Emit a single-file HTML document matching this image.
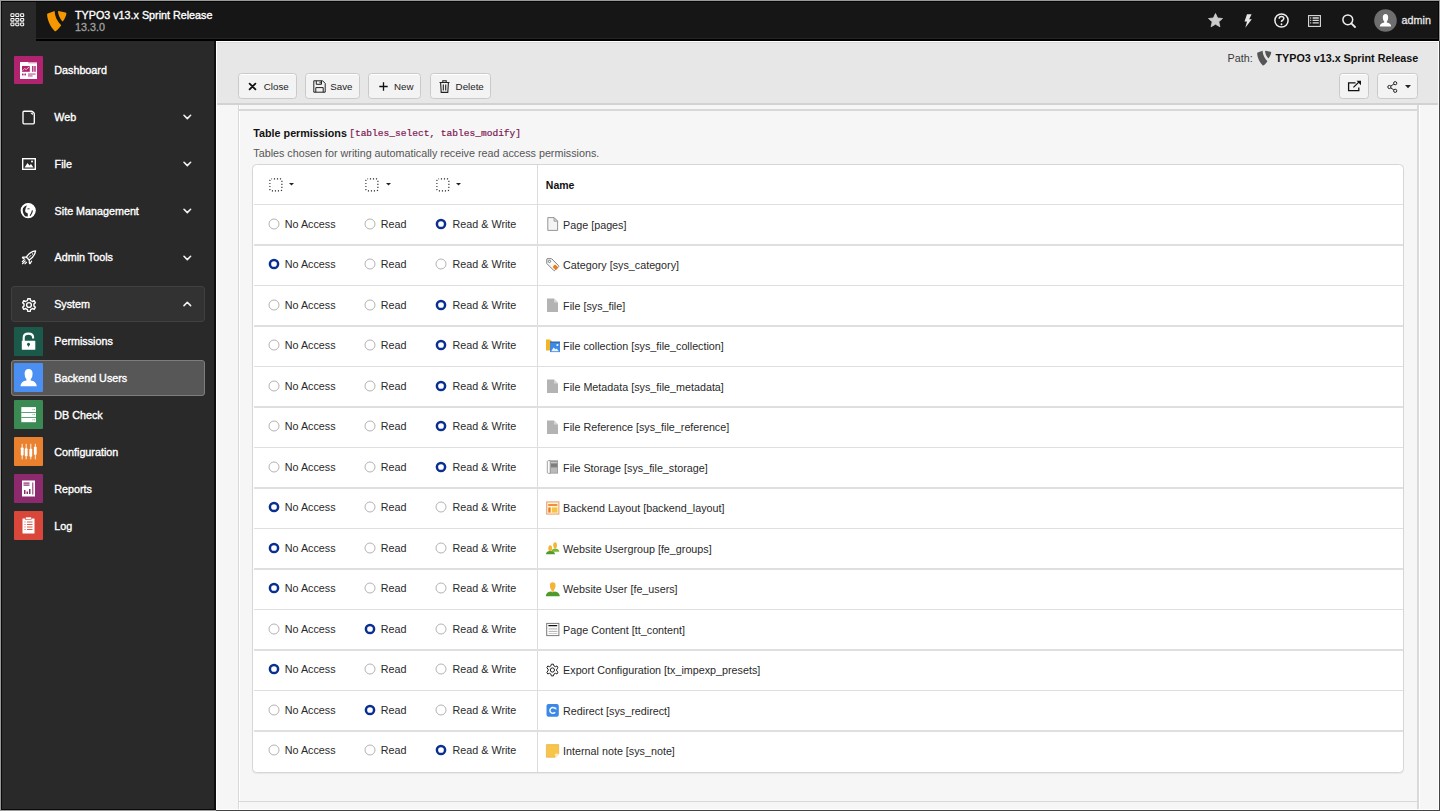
<!DOCTYPE html>
<html><head><meta charset="utf-8"><title>TYPO3 Backend Users</title>
<style>
html,body{margin:0;padding:0;width:1440px;height:811px;overflow:hidden;background:#f6f6f6;font-family:"Liberation Sans",sans-serif;}
.a{position:absolute;box-sizing:border-box;}
.t{position:absolute;white-space:nowrap;line-height:14px;}
svg.a{overflow:visible;}
</style></head><body>
<div class="a" style="left:216.00px;top:41.00px;width:1223.00px;height:770.00px;background:#f6f6f6"></div>
<div class="a" style="left:216.00px;top:41.00px;width:1223.00px;height:62.00px;background:#e7e7e7"></div>
<div class="a" style="left:216.00px;top:41.70px;width:1223.00px;height:1.30px;background:#dcdcdc"></div>
<div class="a" style="left:216.00px;top:103.00px;width:1223.00px;height:1.50px;background:#d2d2d2"></div>
<div class="a" style="left:216.00px;top:40.60px;width:1223.00px;height:1.10px;background:#ffffff"></div>
<div class="a" style="left:216.00px;top:41.00px;width:1.00px;height:770.00px;background:#ffffff"></div>
<div class="t" style="left:1227.60px;top:50.50px;font-size:10.75px;color:#3a3a3a;font-weight:normal;font-family:'Liberation Sans', sans-serif;">Path:</div>
<svg class="a" style="left:1256.00px;top:50.00px;" width="16" height="16" viewBox="0 0 21 22"><path fill="#555" d="M1.8,3.4 L8.6,1 C8.7,6 11,11.3 15.2,15.3 C13.6,17.6 11.6,19.9 10,21 Q9.3,21.5 8.6,20.9 C4.5,16.8 1.2,10 1.1,4.4 Q1.1,3.6 1.8,3.4 Z"/><path fill="#555" d="M12.4,1 L19.5,2.4 Q20.6,2.7 20.4,3.9 C19.8,6.6 18.3,9.5 17.1,11.1 Q16.6,11.8 16,11.1 C13.8,8.4 12.2,5 12,1.6 Q12,1 12.4,1 Z"/></svg>
<div class="t" style="left:1275.50px;top:50.50px;font-size:10.75px;color:#111;font-weight:bold;font-family:'Liberation Sans', sans-serif;">TYPO3 v13.x Sprint Release</div>
<div class="a" style="left:237.80px;top:73.30px;width:59.10px;height:25.40px;background:#f3f3f3;border:1.4px solid #cacaca;border-radius:3.5px;box-shadow:inset 0 1px 0 #fff"></div>
<div class="a" style="left:304.60px;top:73.30px;width:55.70px;height:25.40px;background:#f3f3f3;border:1.4px solid #cacaca;border-radius:3.5px;box-shadow:inset 0 1px 0 #fff"></div>
<div class="a" style="left:368.40px;top:73.30px;width:52.90px;height:25.40px;background:#f3f3f3;border:1.4px solid #cacaca;border-radius:3.5px;box-shadow:inset 0 1px 0 #fff"></div>
<div class="a" style="left:429.60px;top:73.30px;width:61.50px;height:25.40px;background:#f3f3f3;border:1.4px solid #cacaca;border-radius:3.5px;box-shadow:inset 0 1px 0 #fff"></div>
<div class="a" style="left:1339.00px;top:73.30px;width:29.50px;height:25.40px;background:#f3f3f3;border:1.4px solid #cacaca;border-radius:3.5px;box-shadow:inset 0 1px 0 #fff"></div>
<div class="a" style="left:1376.50px;top:73.30px;width:41.50px;height:25.40px;background:#f3f3f3;border:1.4px solid #cacaca;border-radius:3.5px;box-shadow:inset 0 1px 0 #fff"></div>
<div class="t" style="left:263.80px;top:79.50px;font-size:9.75px;color:#222;font-weight:normal;font-family:'Liberation Sans', sans-serif;">Close</div>
<div class="t" style="left:330.30px;top:79.50px;font-size:9.75px;color:#222;font-weight:normal;font-family:'Liberation Sans', sans-serif;">Save</div>
<div class="t" style="left:394.00px;top:79.50px;font-size:9.75px;color:#222;font-weight:normal;font-family:'Liberation Sans', sans-serif;">New</div>
<div class="t" style="left:455.60px;top:79.50px;font-size:9.75px;color:#222;font-weight:normal;font-family:'Liberation Sans', sans-serif;">Delete</div>
<svg class="a" style="left:249.30px;top:82.90px;" width="7" height="7" viewBox="0 0 7 7"><path d="M0.6,0.6 L6.4,6.4 M6.4,0.6 L0.6,6.4" stroke="#111" stroke-width="1.8" stroke-linecap="round"/></svg>
<svg class="a" style="left:313.00px;top:80.00px;" width="13" height="13" viewBox="0 0 13 13"><path d="M0.8,0.8 H9.6 L12.2,3.4 V12.2 H0.8 Z" fill="none" stroke="#222" stroke-width="1"/><path d="M3.3,0.8 V4.3 H8.5 V0.8" fill="none" stroke="#222" stroke-width="1"/><rect x="6.6" y="1.6" width="1.1" height="1.8" fill="#222"/><path d="M2.8,12.2 V7.6 H10.2 V12.2" fill="none" stroke="#222" stroke-width="1"/></svg>
<svg class="a" style="left:379.00px;top:81.50px;" width="9" height="9" viewBox="0 0 9 9"><path d="M4.5,0.3 V8.7 M0.3,4.5 H8.7" stroke="#111" stroke-width="1.3"/></svg>
<svg class="a" style="left:439.10px;top:80.00px;" width="11" height="13" viewBox="0 0 11 13"><path d="M0.5,2.5 H10.5 M3.8,2.3 V0.8 H7.2 V2.3 M1.6,2.6 L2.2,12.4 H8.8 L9.4,2.6 M4.3,4.5 V10.5 M6.7,4.5 V10.5" fill="none" stroke="#222" stroke-width="1.1"/></svg>
<svg class="a" style="left:1347.00px;top:80.00px;" width="15" height="12" viewBox="0 0 15 12"><path d="M8.6,2.9 H1.6 V10.6 H11.8 V7.6" fill="none" stroke="#111" stroke-width="1.3"/><path d="M6.4,7.4 L12.6,1.4" fill="none" stroke="#111" stroke-width="1.3"/><path d="M9.6,0.8 H14 V5.2 Z" fill="#111"/></svg>
<svg class="a" style="left:1386.50px;top:80.50px;" width="11" height="12" viewBox="0 0 11 12"><circle cx="8.2" cy="2.2" r="1.6" fill="none" stroke="#222" stroke-width="1"/><circle cx="2.4" cy="6" r="1.6" fill="none" stroke="#222" stroke-width="1"/><circle cx="8.2" cy="9.8" r="1.6" fill="none" stroke="#222" stroke-width="1"/><path d="M3.8,5.1 L6.8,3.1 M3.8,6.9 L6.8,8.9" stroke="#222" stroke-width="1"/></svg>
<svg class="a" style="left:1404.50px;top:85.30px;" width="6" height="4" viewBox="0 0 6 4"><path d="M0,0 H6 L3,3.2 Z" fill="#222"/></svg>
<div class="a" style="left:237.60px;top:104.50px;width:1.40px;height:706.50px;background:#d9d9d9"></div>
<div class="a" style="left:239.00px;top:104.50px;width:1.00px;height:706.50px;background:#ffffff"></div>
<div class="a" style="left:1417.40px;top:104.50px;width:1.60px;height:706.50px;background:#d9d9d9"></div>
<div class="a" style="left:1419.00px;top:104.50px;width:1.00px;height:706.50px;background:#ffffff"></div>
<div class="a" style="left:239.00px;top:109.20px;width:1178.40px;height:1.40px;background:#d8d8d8"></div>
<div class="a" style="left:240.00px;top:110.60px;width:1177.40px;height:700.40px;background:#f6f6f6"></div>
<div class="a" style="left:239.00px;top:801.00px;width:1178.40px;height:1.20px;background:#d8d8d8"></div>
<div class="t" style="left:253.30px;top:125.60px;font-size:10.75px;color:#111;font-weight:bold;font-family:'Liberation Sans', sans-serif;">Table permissions</div>
<div class="t" style="left:349.20px;top:126.50px;font-size:9.55px;color:#7d1752;font-weight:normal;font-family:'Liberation Mono', monospace;-webkit-text-stroke:0.2px #7d1752">[tables_select, tables_modify]</div>
<div class="t" style="left:253.30px;top:146.20px;font-size:10.75px;color:#555;font-weight:normal;font-family:'Liberation Sans', sans-serif;">Tables chosen for writing automatically receive read access permissions.</div>
<div class="a" style="left:252.00px;top:163.60px;width:1152.20px;height:609.60px;background:#fff;border:1.6px solid #d6d6d6;border-radius:4.5px;box-shadow:0 1px 1px rgba(0,0,0,0.06)"></div>
<div class="a" style="left:537.00px;top:164.80px;width:1.20px;height:607.20px;background:#dcdcdc"></div>
<svg class="a" style="left:268.50px;top:177.60px;" width="14" height="14" viewBox="0 0 14 14"><rect x="0.9" y="0.9" width="12" height="12" rx="1.6" fill="none" stroke="#222" stroke-width="1.1" stroke-dasharray="1.15 1.85" stroke-dashoffset="0.6"/></svg>
<svg class="a" style="left:364.80px;top:177.60px;" width="14" height="14" viewBox="0 0 14 14"><rect x="0.9" y="0.9" width="12" height="12" rx="1.6" fill="none" stroke="#222" stroke-width="1.1" stroke-dasharray="1.15 1.85" stroke-dashoffset="0.6"/></svg>
<svg class="a" style="left:435.80px;top:177.60px;" width="14" height="14" viewBox="0 0 14 14"><rect x="0.9" y="0.9" width="12" height="12" rx="1.6" fill="none" stroke="#222" stroke-width="1.1" stroke-dasharray="1.15 1.85" stroke-dashoffset="0.6"/></svg>
<svg class="a" style="left:288.60px;top:183.00px;" width="5" height="3" viewBox="0 0 5 3"><path d="M0,0 H5 L2.5,2.6 Z" fill="#222"/></svg>
<svg class="a" style="left:385.60px;top:183.00px;" width="5" height="3" viewBox="0 0 5 3"><path d="M0,0 H5 L2.5,2.6 Z" fill="#222"/></svg>
<svg class="a" style="left:456.30px;top:183.00px;" width="5" height="3" viewBox="0 0 5 3"><path d="M0,0 H5 L2.5,2.6 Z" fill="#222"/></svg>
<div class="t" style="left:545.80px;top:177.60px;font-size:10.5px;color:#111;font-weight:bold;font-family:'Liberation Sans', sans-serif;">Name</div>
<div class="a" style="left:253.60px;top:203.70px;width:1149.00px;height:1.60px;background:#dfdfdf"></div>
<svg class="a" style="left:267.50px;top:217.60px;" width="12" height="12" viewBox="0 0 12 12"><circle cx="6" cy="6" r="5" fill="#fff" stroke="#b3b3b3" stroke-width="1"/></svg>
<div class="t" style="left:284.80px;top:216.50px;font-size:10.75px;color:#2a2a2a;font-weight:normal;font-family:'Liberation Sans', sans-serif;">No Access</div>
<svg class="a" style="left:364.00px;top:217.60px;" width="12" height="12" viewBox="0 0 12 12"><circle cx="6" cy="6" r="5" fill="#fff" stroke="#b3b3b3" stroke-width="1"/></svg>
<div class="t" style="left:380.80px;top:216.50px;font-size:10.75px;color:#2a2a2a;font-weight:normal;font-family:'Liberation Sans', sans-serif;">Read</div>
<svg class="a" style="left:435.00px;top:217.60px;" width="12" height="12" viewBox="0 0 12 12"><circle cx="6" cy="6" r="4.1" fill="#fff" stroke="#0b2f91" stroke-width="2.5"/></svg>
<div class="t" style="left:452.60px;top:216.50px;font-size:10.75px;color:#2a2a2a;font-weight:normal;font-family:'Liberation Sans', sans-serif;">Read &amp; Write</div>
<svg class="a" style="left:546.00px;top:217.00px;" width="14" height="14" viewBox="0 0 14 14"><path d="M1.8,0.6 H8 L11.6,4.2 V13.4 H1.8 Z" fill="#f4f4f4" stroke="#8a8a8a" stroke-width="0.9"/><path d="M8,0.6 V4.2 H11.6 Z" fill="#dcdcdc" stroke="#8a8a8a" stroke-width="0.7" stroke-linejoin="round"/></svg>
<div class="t" style="left:563.10px;top:217.80px;font-size:10.75px;color:#2a2a2a;font-weight:normal;font-family:'Liberation Sans', sans-serif;">Page [pages]</div>
<div class="a" style="left:253.60px;top:244.20px;width:1149.00px;height:1.60px;background:#dfdfdf"></div>
<svg class="a" style="left:267.50px;top:258.10px;" width="12" height="12" viewBox="0 0 12 12"><circle cx="6" cy="6" r="4.1" fill="#fff" stroke="#0b2f91" stroke-width="2.5"/></svg>
<div class="t" style="left:284.80px;top:257.00px;font-size:10.75px;color:#2a2a2a;font-weight:normal;font-family:'Liberation Sans', sans-serif;">No Access</div>
<svg class="a" style="left:364.00px;top:258.10px;" width="12" height="12" viewBox="0 0 12 12"><circle cx="6" cy="6" r="5" fill="#fff" stroke="#b3b3b3" stroke-width="1"/></svg>
<div class="t" style="left:380.80px;top:257.00px;font-size:10.75px;color:#2a2a2a;font-weight:normal;font-family:'Liberation Sans', sans-serif;">Read</div>
<svg class="a" style="left:435.00px;top:258.10px;" width="12" height="12" viewBox="0 0 12 12"><circle cx="6" cy="6" r="5" fill="#fff" stroke="#b3b3b3" stroke-width="1"/></svg>
<div class="t" style="left:452.60px;top:257.00px;font-size:10.75px;color:#2a2a2a;font-weight:normal;font-family:'Liberation Sans', sans-serif;">Read &amp; Write</div>
<svg class="a" style="left:546.00px;top:257.50px;" width="14" height="14" viewBox="0 0 14 14"><path d="M1.1,0.7 H5.6 L12.6,7.7 Q13.1,8.2 12.6,8.7 L8.8,12.5 Q8.3,13 7.8,12.5 L0.8,5.5 V1 Z" fill="#fafafa" stroke="#7c7c7c" stroke-width="1"/><circle cx="3.5" cy="3.4" r="1.15" fill="none" stroke="#6f6f6f" stroke-width="0.9"/><rect x="7.6" y="6.9" width="3.6" height="4.6" rx="1" fill="#ee7a16" transform="rotate(-45 9.4 9.2)"/></svg>
<div class="t" style="left:563.10px;top:258.30px;font-size:10.75px;color:#2a2a2a;font-weight:normal;font-family:'Liberation Sans', sans-serif;">Category [sys_category]</div>
<div class="a" style="left:253.60px;top:284.70px;width:1149.00px;height:1.60px;background:#dfdfdf"></div>
<svg class="a" style="left:267.50px;top:298.60px;" width="12" height="12" viewBox="0 0 12 12"><circle cx="6" cy="6" r="5" fill="#fff" stroke="#b3b3b3" stroke-width="1"/></svg>
<div class="t" style="left:284.80px;top:297.50px;font-size:10.75px;color:#2a2a2a;font-weight:normal;font-family:'Liberation Sans', sans-serif;">No Access</div>
<svg class="a" style="left:364.00px;top:298.60px;" width="12" height="12" viewBox="0 0 12 12"><circle cx="6" cy="6" r="5" fill="#fff" stroke="#b3b3b3" stroke-width="1"/></svg>
<div class="t" style="left:380.80px;top:297.50px;font-size:10.75px;color:#2a2a2a;font-weight:normal;font-family:'Liberation Sans', sans-serif;">Read</div>
<svg class="a" style="left:435.00px;top:298.60px;" width="12" height="12" viewBox="0 0 12 12"><circle cx="6" cy="6" r="4.1" fill="#fff" stroke="#0b2f91" stroke-width="2.5"/></svg>
<div class="t" style="left:452.60px;top:297.50px;font-size:10.75px;color:#2a2a2a;font-weight:normal;font-family:'Liberation Sans', sans-serif;">Read &amp; Write</div>
<svg class="a" style="left:546.00px;top:298.00px;" width="14" height="14" viewBox="0 0 14 14"><path d="M1,0.5 H8 L12,4.5 V13.9 H1 Z" fill="#b3b3b3"/><path d="M8,0.5 V4.5 H12 Z" fill="#d6d6d6"/></svg>
<div class="t" style="left:563.10px;top:298.80px;font-size:10.75px;color:#2a2a2a;font-weight:normal;font-family:'Liberation Sans', sans-serif;">File [sys_file]</div>
<div class="a" style="left:253.60px;top:325.20px;width:1149.00px;height:1.60px;background:#dfdfdf"></div>
<svg class="a" style="left:267.50px;top:339.10px;" width="12" height="12" viewBox="0 0 12 12"><circle cx="6" cy="6" r="5" fill="#fff" stroke="#b3b3b3" stroke-width="1"/></svg>
<div class="t" style="left:284.80px;top:338.00px;font-size:10.75px;color:#2a2a2a;font-weight:normal;font-family:'Liberation Sans', sans-serif;">No Access</div>
<svg class="a" style="left:364.00px;top:339.10px;" width="12" height="12" viewBox="0 0 12 12"><circle cx="6" cy="6" r="5" fill="#fff" stroke="#b3b3b3" stroke-width="1"/></svg>
<div class="t" style="left:380.80px;top:338.00px;font-size:10.75px;color:#2a2a2a;font-weight:normal;font-family:'Liberation Sans', sans-serif;">Read</div>
<svg class="a" style="left:435.00px;top:339.10px;" width="12" height="12" viewBox="0 0 12 12"><circle cx="6" cy="6" r="4.1" fill="#fff" stroke="#0b2f91" stroke-width="2.5"/></svg>
<div class="t" style="left:452.60px;top:338.00px;font-size:10.75px;color:#2a2a2a;font-weight:normal;font-family:'Liberation Sans', sans-serif;">Read &amp; Write</div>
<svg class="a" style="left:546.00px;top:338.50px;" width="14" height="14" viewBox="0 0 14 14"><path d="M0,0.6 H3.8 L5.9,2 V11.6 H0 Z" fill="#f2b526"/><rect x="4" y="2.7" width="10" height="10.4" fill="#3f89e6"/><rect x="4" y="2.7" width="10" height="0.9" fill="#2f5f9c"/><path d="M5.2,12.2 L7.6,8.6 L9.4,10.3 L10.6,9.4 L12.9,12.2 Z" fill="#e9f6ff"/><circle cx="11.4" cy="6" r="1.1" fill="#e9f6ff"/></svg>
<div class="t" style="left:563.10px;top:339.30px;font-size:10.75px;color:#2a2a2a;font-weight:normal;font-family:'Liberation Sans', sans-serif;">File collection [sys_file_collection]</div>
<div class="a" style="left:253.60px;top:365.70px;width:1149.00px;height:1.60px;background:#dfdfdf"></div>
<svg class="a" style="left:267.50px;top:379.60px;" width="12" height="12" viewBox="0 0 12 12"><circle cx="6" cy="6" r="5" fill="#fff" stroke="#b3b3b3" stroke-width="1"/></svg>
<div class="t" style="left:284.80px;top:378.50px;font-size:10.75px;color:#2a2a2a;font-weight:normal;font-family:'Liberation Sans', sans-serif;">No Access</div>
<svg class="a" style="left:364.00px;top:379.60px;" width="12" height="12" viewBox="0 0 12 12"><circle cx="6" cy="6" r="5" fill="#fff" stroke="#b3b3b3" stroke-width="1"/></svg>
<div class="t" style="left:380.80px;top:378.50px;font-size:10.75px;color:#2a2a2a;font-weight:normal;font-family:'Liberation Sans', sans-serif;">Read</div>
<svg class="a" style="left:435.00px;top:379.60px;" width="12" height="12" viewBox="0 0 12 12"><circle cx="6" cy="6" r="4.1" fill="#fff" stroke="#0b2f91" stroke-width="2.5"/></svg>
<div class="t" style="left:452.60px;top:378.50px;font-size:10.75px;color:#2a2a2a;font-weight:normal;font-family:'Liberation Sans', sans-serif;">Read &amp; Write</div>
<svg class="a" style="left:546.00px;top:379.00px;" width="14" height="14" viewBox="0 0 14 14"><path d="M1,0.5 H8 L12,4.5 V13.9 H1 Z" fill="#b3b3b3"/><path d="M8,0.5 V4.5 H12 Z" fill="#d6d6d6"/></svg>
<div class="t" style="left:563.10px;top:379.80px;font-size:10.75px;color:#2a2a2a;font-weight:normal;font-family:'Liberation Sans', sans-serif;">File Metadata [sys_file_metadata]</div>
<div class="a" style="left:253.60px;top:406.20px;width:1149.00px;height:1.60px;background:#dfdfdf"></div>
<svg class="a" style="left:267.50px;top:420.10px;" width="12" height="12" viewBox="0 0 12 12"><circle cx="6" cy="6" r="5" fill="#fff" stroke="#b3b3b3" stroke-width="1"/></svg>
<div class="t" style="left:284.80px;top:419.00px;font-size:10.75px;color:#2a2a2a;font-weight:normal;font-family:'Liberation Sans', sans-serif;">No Access</div>
<svg class="a" style="left:364.00px;top:420.10px;" width="12" height="12" viewBox="0 0 12 12"><circle cx="6" cy="6" r="5" fill="#fff" stroke="#b3b3b3" stroke-width="1"/></svg>
<div class="t" style="left:380.80px;top:419.00px;font-size:10.75px;color:#2a2a2a;font-weight:normal;font-family:'Liberation Sans', sans-serif;">Read</div>
<svg class="a" style="left:435.00px;top:420.10px;" width="12" height="12" viewBox="0 0 12 12"><circle cx="6" cy="6" r="4.1" fill="#fff" stroke="#0b2f91" stroke-width="2.5"/></svg>
<div class="t" style="left:452.60px;top:419.00px;font-size:10.75px;color:#2a2a2a;font-weight:normal;font-family:'Liberation Sans', sans-serif;">Read &amp; Write</div>
<svg class="a" style="left:546.00px;top:419.50px;" width="14" height="14" viewBox="0 0 14 14"><path d="M1,0.5 H8 L12,4.5 V13.9 H1 Z" fill="#b3b3b3"/><path d="M8,0.5 V4.5 H12 Z" fill="#d6d6d6"/></svg>
<div class="t" style="left:563.10px;top:420.30px;font-size:10.75px;color:#2a2a2a;font-weight:normal;font-family:'Liberation Sans', sans-serif;">File Reference [sys_file_reference]</div>
<div class="a" style="left:253.60px;top:446.70px;width:1149.00px;height:1.60px;background:#dfdfdf"></div>
<svg class="a" style="left:267.50px;top:460.60px;" width="12" height="12" viewBox="0 0 12 12"><circle cx="6" cy="6" r="5" fill="#fff" stroke="#b3b3b3" stroke-width="1"/></svg>
<div class="t" style="left:284.80px;top:459.50px;font-size:10.75px;color:#2a2a2a;font-weight:normal;font-family:'Liberation Sans', sans-serif;">No Access</div>
<svg class="a" style="left:364.00px;top:460.60px;" width="12" height="12" viewBox="0 0 12 12"><circle cx="6" cy="6" r="5" fill="#fff" stroke="#b3b3b3" stroke-width="1"/></svg>
<div class="t" style="left:380.80px;top:459.50px;font-size:10.75px;color:#2a2a2a;font-weight:normal;font-family:'Liberation Sans', sans-serif;">Read</div>
<svg class="a" style="left:435.00px;top:460.60px;" width="12" height="12" viewBox="0 0 12 12"><circle cx="6" cy="6" r="4.1" fill="#fff" stroke="#0b2f91" stroke-width="2.5"/></svg>
<div class="t" style="left:452.60px;top:459.50px;font-size:10.75px;color:#2a2a2a;font-weight:normal;font-family:'Liberation Sans', sans-serif;">Read &amp; Write</div>
<svg class="a" style="left:546.00px;top:460.00px;" width="14" height="14" viewBox="0 0 14 14"><path d="M1.3,1.5 Q1.3,0.9 2.2,0.7 L4.2,0.3 V13.6 L2.2,13.2 Q1.3,13 1.3,12.4 Z" fill="#fdfdfd" stroke="#8a8a8a" stroke-width="0.8"/><rect x="4.2" y="0.3" width="7.8" height="13.3" fill="#9a9a9a"/><rect x="5" y="2.3" width="6.2" height="0.8" fill="#d8d8d8"/><rect x="5" y="3.8" width="6.2" height="3" fill="#7d7d7d"/><rect x="5" y="7.8" width="6.2" height="5" fill="#b9b9b9"/></svg>
<div class="t" style="left:563.10px;top:460.80px;font-size:10.75px;color:#2a2a2a;font-weight:normal;font-family:'Liberation Sans', sans-serif;">File Storage [sys_file_storage]</div>
<div class="a" style="left:253.60px;top:487.20px;width:1149.00px;height:1.60px;background:#dfdfdf"></div>
<svg class="a" style="left:267.50px;top:501.10px;" width="12" height="12" viewBox="0 0 12 12"><circle cx="6" cy="6" r="4.1" fill="#fff" stroke="#0b2f91" stroke-width="2.5"/></svg>
<div class="t" style="left:284.80px;top:500.00px;font-size:10.75px;color:#2a2a2a;font-weight:normal;font-family:'Liberation Sans', sans-serif;">No Access</div>
<svg class="a" style="left:364.00px;top:501.10px;" width="12" height="12" viewBox="0 0 12 12"><circle cx="6" cy="6" r="5" fill="#fff" stroke="#b3b3b3" stroke-width="1"/></svg>
<div class="t" style="left:380.80px;top:500.00px;font-size:10.75px;color:#2a2a2a;font-weight:normal;font-family:'Liberation Sans', sans-serif;">Read</div>
<svg class="a" style="left:435.00px;top:501.10px;" width="12" height="12" viewBox="0 0 12 12"><circle cx="6" cy="6" r="5" fill="#fff" stroke="#b3b3b3" stroke-width="1"/></svg>
<div class="t" style="left:452.60px;top:500.00px;font-size:10.75px;color:#2a2a2a;font-weight:normal;font-family:'Liberation Sans', sans-serif;">Read &amp; Write</div>
<svg class="a" style="left:546.00px;top:500.50px;" width="14" height="14" viewBox="0 0 14 14"><rect x="0.7" y="0.9" width="12.2" height="12.2" fill="#fff6cf" stroke="#e79b75" stroke-width="1"/><rect x="2.2" y="3.2" width="9.2" height="1.6" fill="#ee7424"/><rect x="2.3" y="6.4" width="2.3" height="5.2" fill="#ee7424"/><rect x="5.9" y="6.4" width="5.5" height="5.2" fill="#f6c443"/></svg>
<div class="t" style="left:563.10px;top:501.30px;font-size:10.75px;color:#2a2a2a;font-weight:normal;font-family:'Liberation Sans', sans-serif;">Backend Layout [backend_layout]</div>
<div class="a" style="left:253.60px;top:527.70px;width:1149.00px;height:1.60px;background:#dfdfdf"></div>
<svg class="a" style="left:267.50px;top:541.60px;" width="12" height="12" viewBox="0 0 12 12"><circle cx="6" cy="6" r="4.1" fill="#fff" stroke="#0b2f91" stroke-width="2.5"/></svg>
<div class="t" style="left:284.80px;top:540.50px;font-size:10.75px;color:#2a2a2a;font-weight:normal;font-family:'Liberation Sans', sans-serif;">No Access</div>
<svg class="a" style="left:364.00px;top:541.60px;" width="12" height="12" viewBox="0 0 12 12"><circle cx="6" cy="6" r="5" fill="#fff" stroke="#b3b3b3" stroke-width="1"/></svg>
<div class="t" style="left:380.80px;top:540.50px;font-size:10.75px;color:#2a2a2a;font-weight:normal;font-family:'Liberation Sans', sans-serif;">Read</div>
<svg class="a" style="left:435.00px;top:541.60px;" width="12" height="12" viewBox="0 0 12 12"><circle cx="6" cy="6" r="5" fill="#fff" stroke="#b3b3b3" stroke-width="1"/></svg>
<div class="t" style="left:452.60px;top:540.50px;font-size:10.75px;color:#2a2a2a;font-weight:normal;font-family:'Liberation Sans', sans-serif;">Read &amp; Write</div>
<svg class="a" style="left:546.00px;top:541.00px;" width="14" height="14" viewBox="0 0 14 14"><ellipse cx="9.1" cy="4.3" rx="1.9" ry="3.1" fill="#f2b53a"/><path d="M5.5,10.8 Q6,7.6 9,7.6 Q12.8,7.6 13.4,10.8 Z" fill="#7cb82f"/><ellipse cx="4.2" cy="7.4" rx="1.9" ry="3.1" fill="#f2b53a"/><path d="M-0.1,13.2 Q0.4,10.1 4.2,10.1 Q8.6,10.1 9,13.2 Z" fill="#4f9a2a"/></svg>
<div class="t" style="left:563.10px;top:541.80px;font-size:10.75px;color:#2a2a2a;font-weight:normal;font-family:'Liberation Sans', sans-serif;">Website Usergroup [fe_groups]</div>
<div class="a" style="left:253.60px;top:568.20px;width:1149.00px;height:1.60px;background:#dfdfdf"></div>
<svg class="a" style="left:267.50px;top:582.10px;" width="12" height="12" viewBox="0 0 12 12"><circle cx="6" cy="6" r="4.1" fill="#fff" stroke="#0b2f91" stroke-width="2.5"/></svg>
<div class="t" style="left:284.80px;top:581.00px;font-size:10.75px;color:#2a2a2a;font-weight:normal;font-family:'Liberation Sans', sans-serif;">No Access</div>
<svg class="a" style="left:364.00px;top:582.10px;" width="12" height="12" viewBox="0 0 12 12"><circle cx="6" cy="6" r="5" fill="#fff" stroke="#b3b3b3" stroke-width="1"/></svg>
<div class="t" style="left:380.80px;top:581.00px;font-size:10.75px;color:#2a2a2a;font-weight:normal;font-family:'Liberation Sans', sans-serif;">Read</div>
<svg class="a" style="left:435.00px;top:582.10px;" width="12" height="12" viewBox="0 0 12 12"><circle cx="6" cy="6" r="5" fill="#fff" stroke="#b3b3b3" stroke-width="1"/></svg>
<div class="t" style="left:452.60px;top:581.00px;font-size:10.75px;color:#2a2a2a;font-weight:normal;font-family:'Liberation Sans', sans-serif;">Read &amp; Write</div>
<svg class="a" style="left:546.00px;top:581.50px;" width="14" height="14" viewBox="0 0 14 14"><path d="M6.7,0.3 Q3.8,0.3 3.8,3.6 Q3.8,6.6 5.5,8.2 V9.7 H7.9 V8.2 Q9.6,6.6 9.6,3.6 Q9.6,0.3 6.7,0.3 Z" fill="#f2b53a"/><path d="M-0.2,14.3 Q0,10.3 4.5,9.6 L6.7,10.3 L8.9,9.6 Q13.6,10.3 13.8,14.3 Z" fill="#4f9a2a"/></svg>
<div class="t" style="left:563.10px;top:582.30px;font-size:10.75px;color:#2a2a2a;font-weight:normal;font-family:'Liberation Sans', sans-serif;">Website User [fe_users]</div>
<div class="a" style="left:253.60px;top:608.70px;width:1149.00px;height:1.60px;background:#dfdfdf"></div>
<svg class="a" style="left:267.50px;top:622.60px;" width="12" height="12" viewBox="0 0 12 12"><circle cx="6" cy="6" r="5" fill="#fff" stroke="#b3b3b3" stroke-width="1"/></svg>
<div class="t" style="left:284.80px;top:621.50px;font-size:10.75px;color:#2a2a2a;font-weight:normal;font-family:'Liberation Sans', sans-serif;">No Access</div>
<svg class="a" style="left:364.00px;top:622.60px;" width="12" height="12" viewBox="0 0 12 12"><circle cx="6" cy="6" r="4.1" fill="#fff" stroke="#0b2f91" stroke-width="2.5"/></svg>
<div class="t" style="left:380.80px;top:621.50px;font-size:10.75px;color:#2a2a2a;font-weight:normal;font-family:'Liberation Sans', sans-serif;">Read</div>
<svg class="a" style="left:435.00px;top:622.60px;" width="12" height="12" viewBox="0 0 12 12"><circle cx="6" cy="6" r="5" fill="#fff" stroke="#b3b3b3" stroke-width="1"/></svg>
<div class="t" style="left:452.60px;top:621.50px;font-size:10.75px;color:#2a2a2a;font-weight:normal;font-family:'Liberation Sans', sans-serif;">Read &amp; Write</div>
<svg class="a" style="left:546.00px;top:622.00px;" width="14" height="14" viewBox="0 0 14 14"><rect x="0.7" y="1.4" width="12.2" height="12.2" fill="#fff" stroke="#7a7a7a" stroke-width="1"/><rect x="2.3" y="3.1" width="9" height="1.2" rx="0.5" fill="#111"/><rect x="2.6" y="5.9" width="8.7" height="1.8" fill="#cfcfcf"/><rect x="2.6" y="8.9" width="8.7" height="0.8" fill="#9a9a9a"/><rect x="2.6" y="11" width="8.7" height="0.8" fill="#bdbdbd"/></svg>
<div class="t" style="left:563.10px;top:622.80px;font-size:10.75px;color:#2a2a2a;font-weight:normal;font-family:'Liberation Sans', sans-serif;">Page Content [tt_content]</div>
<div class="a" style="left:253.60px;top:649.20px;width:1149.00px;height:1.60px;background:#dfdfdf"></div>
<svg class="a" style="left:267.50px;top:663.10px;" width="12" height="12" viewBox="0 0 12 12"><circle cx="6" cy="6" r="4.1" fill="#fff" stroke="#0b2f91" stroke-width="2.5"/></svg>
<div class="t" style="left:284.80px;top:662.00px;font-size:10.75px;color:#2a2a2a;font-weight:normal;font-family:'Liberation Sans', sans-serif;">No Access</div>
<svg class="a" style="left:364.00px;top:663.10px;" width="12" height="12" viewBox="0 0 12 12"><circle cx="6" cy="6" r="5" fill="#fff" stroke="#b3b3b3" stroke-width="1"/></svg>
<div class="t" style="left:380.80px;top:662.00px;font-size:10.75px;color:#2a2a2a;font-weight:normal;font-family:'Liberation Sans', sans-serif;">Read</div>
<svg class="a" style="left:435.00px;top:663.10px;" width="12" height="12" viewBox="0 0 12 12"><circle cx="6" cy="6" r="5" fill="#fff" stroke="#b3b3b3" stroke-width="1"/></svg>
<div class="t" style="left:452.60px;top:662.00px;font-size:10.75px;color:#2a2a2a;font-weight:normal;font-family:'Liberation Sans', sans-serif;">Read &amp; Write</div>
<svg class="a" style="left:546.00px;top:662.50px;" width="14" height="14" viewBox="0 0 14 14"><path d="M5.4,0.9 H7.4 L7.9,2.6 L9.4,3.4 L11,2.7 L12,4.5 L10.7,5.8 V7.6 L12,8.9 L11,10.7 L9.4,10 L7.9,10.8 L7.4,12.6 H5.4 L4.9,10.8 L3.4,10 L1.8,10.7 L0.8,8.9 L2.1,7.6 V5.8 L0.8,4.5 L1.8,2.7 L3.4,3.4 L4.9,2.6 Z" fill="none" stroke="#222" stroke-width="1" stroke-linejoin="round" transform="translate(0,0.3)"/><circle cx="6.4" cy="7" r="2.1" fill="none" stroke="#222" stroke-width="1"/></svg>
<div class="t" style="left:563.10px;top:663.30px;font-size:10.75px;color:#2a2a2a;font-weight:normal;font-family:'Liberation Sans', sans-serif;">Export Configuration [tx_impexp_presets]</div>
<div class="a" style="left:253.60px;top:689.70px;width:1149.00px;height:1.60px;background:#dfdfdf"></div>
<svg class="a" style="left:267.50px;top:703.60px;" width="12" height="12" viewBox="0 0 12 12"><circle cx="6" cy="6" r="5" fill="#fff" stroke="#b3b3b3" stroke-width="1"/></svg>
<div class="t" style="left:284.80px;top:702.50px;font-size:10.75px;color:#2a2a2a;font-weight:normal;font-family:'Liberation Sans', sans-serif;">No Access</div>
<svg class="a" style="left:364.00px;top:703.60px;" width="12" height="12" viewBox="0 0 12 12"><circle cx="6" cy="6" r="4.1" fill="#fff" stroke="#0b2f91" stroke-width="2.5"/></svg>
<div class="t" style="left:380.80px;top:702.50px;font-size:10.75px;color:#2a2a2a;font-weight:normal;font-family:'Liberation Sans', sans-serif;">Read</div>
<svg class="a" style="left:435.00px;top:703.60px;" width="12" height="12" viewBox="0 0 12 12"><circle cx="6" cy="6" r="5" fill="#fff" stroke="#b3b3b3" stroke-width="1"/></svg>
<div class="t" style="left:452.60px;top:702.50px;font-size:10.75px;color:#2a2a2a;font-weight:normal;font-family:'Liberation Sans', sans-serif;">Read &amp; Write</div>
<svg class="a" style="left:546.00px;top:703.00px;" width="14" height="14" viewBox="0 0 14 14"><rect x="0.5" y="0.9" width="12.3" height="12.9" rx="2" fill="#3d87e6"/><path d="M9.1,5.6 A2.9,2.9 0 1 0 9.1,9.2" fill="none" stroke="#f2fbff" stroke-width="1.5"/><path d="M7.6,4.4 H10.3 V6.9 Z" fill="#f2fbff"/></svg>
<div class="t" style="left:563.10px;top:703.80px;font-size:10.75px;color:#2a2a2a;font-weight:normal;font-family:'Liberation Sans', sans-serif;">Redirect [sys_redirect]</div>
<div class="a" style="left:253.60px;top:730.20px;width:1149.00px;height:1.60px;background:#dfdfdf"></div>
<svg class="a" style="left:267.50px;top:744.10px;" width="12" height="12" viewBox="0 0 12 12"><circle cx="6" cy="6" r="5" fill="#fff" stroke="#b3b3b3" stroke-width="1"/></svg>
<div class="t" style="left:284.80px;top:743.00px;font-size:10.75px;color:#2a2a2a;font-weight:normal;font-family:'Liberation Sans', sans-serif;">No Access</div>
<svg class="a" style="left:364.00px;top:744.10px;" width="12" height="12" viewBox="0 0 12 12"><circle cx="6" cy="6" r="5" fill="#fff" stroke="#b3b3b3" stroke-width="1"/></svg>
<div class="t" style="left:380.80px;top:743.00px;font-size:10.75px;color:#2a2a2a;font-weight:normal;font-family:'Liberation Sans', sans-serif;">Read</div>
<svg class="a" style="left:435.00px;top:744.10px;" width="12" height="12" viewBox="0 0 12 12"><circle cx="6" cy="6" r="4.1" fill="#fff" stroke="#0b2f91" stroke-width="2.5"/></svg>
<div class="t" style="left:452.60px;top:743.00px;font-size:10.75px;color:#2a2a2a;font-weight:normal;font-family:'Liberation Sans', sans-serif;">Read &amp; Write</div>
<svg class="a" style="left:546.00px;top:743.50px;" width="14" height="14" viewBox="0 0 14 14"><path d="M0.4,0.6 H12.7 V9.8 L9.2,13.3 H0.4 Z" fill="#f6c54a" stroke="#e2a83a" stroke-width="0.6"/><path d="M12.7,9.8 L9.2,9.8 L9.2,13.3 Z" fill="#fff2c2"/></svg>
<div class="t" style="left:563.10px;top:744.30px;font-size:10.75px;color:#2a2a2a;font-weight:normal;font-family:'Liberation Sans', sans-serif;">Internal note [sys_note]</div>
<div class="a" style="left:0.00px;top:0.00px;width:1440.00px;height:40.60px;background:#161616"></div>
<div class="a" style="left:36.30px;top:37.80px;width:1403.70px;height:1.20px;background:#242424"></div>
<div class="a" style="left:36.30px;top:39.00px;width:1403.70px;height:1.60px;background:#000000"></div>
<div class="a" style="left:1.00px;top:1.00px;width:35.30px;height:40.00px;background:#292929"></div>
<svg class="a" style="left:10.20px;top:13.20px;" width="15" height="14" viewBox="0 0 15 14"><rect x="0.90" y="0.80" width="3.1" height="2.7" rx="0.6" fill="none" stroke="#fff" stroke-width="1.05"/><rect x="5.75" y="0.80" width="3.1" height="2.7" rx="0.6" fill="none" stroke="#fff" stroke-width="1.05"/><rect x="10.60" y="0.80" width="3.1" height="2.7" rx="0.6" fill="none" stroke="#fff" stroke-width="1.05"/><rect x="0.90" y="5.40" width="3.1" height="2.7" rx="0.6" fill="none" stroke="#fff" stroke-width="1.05"/><rect x="5.75" y="5.40" width="3.1" height="2.7" rx="0.6" fill="none" stroke="#fff" stroke-width="1.05"/><rect x="10.60" y="5.40" width="3.1" height="2.7" rx="0.6" fill="none" stroke="#fff" stroke-width="1.05"/><rect x="0.90" y="10.00" width="3.1" height="2.7" rx="0.6" fill="none" stroke="#fff" stroke-width="1.05"/><rect x="5.75" y="10.00" width="3.1" height="2.7" rx="0.6" fill="none" stroke="#fff" stroke-width="1.05"/><rect x="10.60" y="10.00" width="3.1" height="2.7" rx="0.6" fill="none" stroke="#fff" stroke-width="1.05"/></svg>
<svg class="a" style="left:46.00px;top:10.00px;" width="21" height="22" viewBox="0 0 21 22"><path fill="#f49700" d="M1.8,3.4 L8.6,1 C8.7,6 11,11.3 15.2,15.3 C13.6,17.6 11.6,19.9 10,21 Q9.3,21.5 8.6,20.9 C4.5,16.8 1.2,10 1.1,4.4 Q1.1,3.6 1.8,3.4 Z"/><path fill="#f49700" d="M12.4,1 L19.5,2.4 Q20.6,2.7 20.4,3.9 C19.8,6.6 18.3,9.5 17.1,11.1 Q16.6,11.8 16,11.1 C13.8,8.4 12.2,5 12,1.6 Q12,1 12.4,1 Z"/></svg>
<div class="t" style="left:75.00px;top:7.75px;font-size:10.75px;color:#fff;font-weight:normal;font-family:'Liberation Sans', sans-serif;-webkit-text-stroke:0.35px #fff">TYPO3 v13.x Sprint Release</div>
<div class="t" style="left:75.00px;top:20.30px;font-size:10.75px;color:#a0a0a0;font-weight:normal;font-family:'Liberation Sans', sans-serif;-webkit-text-stroke:0.3px #a0a0a0">13.3.0</div>
<svg class="a" style="left:1207.50px;top:13.30px;" width="15" height="15" viewBox="0 0 15 15"><path d="M7.5,0.5 L9.6,5 L14.5,5.5 L10.8,8.8 L11.9,13.8 L7.5,11.2 L3.1,13.8 L4.2,8.8 L0.5,5.5 L5.4,5 Z" fill="#ccc" stroke="#ccc" stroke-width="0.8" stroke-linejoin="round"/></svg>
<svg class="a" style="left:1244.00px;top:13.50px;" width="8" height="14" viewBox="0 0 8 14"><path d="M3,0.3 H7.6 L5.2,5.2 H7.8 L1.3,13.7 L3,7.5 H0.5 Z" fill="#e6e6e6"/></svg>
<svg class="a" style="left:1274.00px;top:13.30px;" width="15" height="15" viewBox="0 0 15 15"><circle cx="7.5" cy="7.5" r="6.6" fill="none" stroke="#eee" stroke-width="1.5"/><path d="M5.2,5.8 Q5.2,3.6 7.5,3.6 Q9.8,3.6 9.8,5.6 Q9.8,6.9 8.3,7.5 Q7.5,7.9 7.5,9" fill="none" stroke="#eee" stroke-width="1.5"/><circle cx="7.5" cy="11.2" r="0.95" fill="#eee"/></svg>
<svg class="a" style="left:1308.30px;top:14.60px;" width="13" height="12" viewBox="0 0 13 12"><rect x="0.6" y="0.6" width="11.8" height="10.8" fill="none" stroke="#ddd" stroke-width="1.1"/><path d="M2.2,3 H3.2 M2.2,5.4 H3.2 M2.2,7.8 H3.2 M4.6,3 H10.8 M4.6,5.4 H10.8 M4.6,7.8 H10.8" stroke="#ddd" stroke-width="1.3"/></svg>
<svg class="a" style="left:1341.80px;top:13.60px;" width="14" height="14" viewBox="0 0 14 14"><circle cx="5.8" cy="5.8" r="4.9" fill="none" stroke="#eee" stroke-width="1.5"/><path d="M9.3,9.3 L13,13" stroke="#eee" stroke-width="1.8" stroke-linecap="round"/></svg>
<svg class="a" style="left:1374.30px;top:8.70px;" width="23" height="23" viewBox="0 0 23 23"><circle cx="11.5" cy="11.5" r="11.3" fill="#6e6e6e"/><path d="M11.5,5 Q8.8,5 8.8,8.5 Q8.8,11.3 10.2,12.6 V13.6 Q6.3,14 5.8,17.5 H17.2 Q16.7,14 12.8,13.6 V12.6 Q14.2,11.3 14.2,8.5 Q14.2,5 11.5,5 Z" fill="#fff"/></svg>
<div class="t" style="left:1401.60px;top:12.80px;font-size:10.75px;color:#e6e6e6;font-weight:normal;font-family:'Liberation Sans', sans-serif;-webkit-text-stroke:0.3px #e6e6e6">admin</div>
<div class="a" style="left:1.00px;top:40.50px;width:213.00px;height:770.50px;background:#292929"></div>
<div class="a" style="left:214.00px;top:40.50px;width:2.00px;height:770.50px;background:#0f0f0f"></div>
<div class="a" style="left:14.00px;top:55.80px;width:29.30px;height:28.60px;background:#b0236e;border-radius:1px"></div>
<svg class="a" style="left:19.90px;top:61.80px;" width="17" height="17" viewBox="0 0 17 17"><path d="M0,0 H17 V17 H0 Z" fill="#fff"/><path d="M8.2,0.2 H17 V1.3 H8.2 Z" fill="#b0236e" opacity="0.55"/><rect x="2" y="4" width="7.8" height="5.8" fill="#b0236e"/><path d="M2.4,8.8 L4.6,6.6 L6.2,7.6 L9.2,4.8" stroke="#f6c9de" stroke-width="0.9" fill="none"/><rect x="12.1" y="4" width="1.4" height="5.8" fill="#b0236e"/><rect x="14.3" y="4" width="1.4" height="5.8" fill="#b0236e"/><rect x="2" y="11.6" width="1.6" height="1.8" fill="#b0236e"/><rect x="4.4" y="11.6" width="1.6" height="1.8" fill="#b0236e"/><rect x="8" y="11.6" width="7.6" height="0.9" fill="#b0236e"/><rect x="8" y="13.5" width="4.6" height="0.9" fill="#b0236e"/></svg>
<div class="t" style="left:54.30px;top:62.90px;font-size:10.75px;color:#fff;font-weight:normal;font-family:'Liberation Sans', sans-serif;-webkit-text-stroke:0.35px #fff">Dashboard</div>
<svg class="a" style="left:22.20px;top:109.70px;" width="13" height="15" viewBox="0 0 13 15"><path d="M2,1.2 H9.3 Q10.2,1.2 11,2 L11.6,2.6 Q12.3,3.3 12.3,4.2 V12.8 Q12.3,13.8 11.3,13.8 H2 Q1,13.8 1,12.8 V2.2 Q1,1.2 2,1.2 Z" fill="none" stroke="#fff" stroke-width="1.35"/><path d="M8.2,2.7 H10.8 V5.2 Z" fill="#fff"/></svg>
<div class="t" style="left:54.30px;top:110.40px;font-size:10.75px;color:#fff;font-weight:normal;font-family:'Liberation Sans', sans-serif;-webkit-text-stroke:0.35px #fff">Web</div>
<svg class="a" style="left:182.60px;top:114.30px;" width="8.6" height="6" viewBox="0 0 8.6 6"><path d="M1,1.3 L4.3,4.6 L7.6,1.3" fill="none" stroke="#f2f2f2" stroke-width="1.6" stroke-linecap="round" stroke-linejoin="round"/></svg>
<svg class="a" style="left:21.50px;top:157.80px;" width="14" height="12" viewBox="0 0 14 12"><rect x="0.7" y="0.7" width="12.6" height="10.6" fill="none" stroke="#fff" stroke-width="1.4"/><path d="M2.5,9.5 L5.5,5 L7.5,7.5 L9,6 L11.5,9.5 Z" fill="#fff"/><circle cx="10" cy="3.5" r="1" fill="#fff"/></svg>
<div class="t" style="left:54.60px;top:157.20px;font-size:10.75px;color:#fff;font-weight:normal;font-family:'Liberation Sans', sans-serif;-webkit-text-stroke:0.35px #fff">File</div>
<svg class="a" style="left:182.60px;top:161.30px;" width="8.6" height="6" viewBox="0 0 8.6 6"><path d="M1,1.3 L4.3,4.6 L7.6,1.3" fill="none" stroke="#f2f2f2" stroke-width="1.6" stroke-linecap="round" stroke-linejoin="round"/></svg>
<svg class="a" style="left:20.30px;top:202.60px;" width="16" height="16" viewBox="0 0 16 16"><circle cx="8.2" cy="7.6" r="7.1" fill="#fff"/><circle cx="8.2" cy="7.6" r="6.9" fill="none" stroke="#fff" stroke-width="1.4"/><path d="M6.8,2.2 Q4.2,3 3,5.2 Q2.2,7.4 3,9.6 Q3.8,11.6 5,13.3 L7.8,13.6 L7.8,10.4 Q6.4,9.6 5.6,9.2 Q4.8,8 5.4,6.6 Q5.6,5 6.4,3.8 Z" fill="#292929"/><path d="M13,7.4 Q12.6,10.4 10.6,13 L9.6,12.4 Q11.3,10.3 11.9,7.2 Z" fill="#292929"/><path d="M7.4,5.4 H9.6 V6.3 H7.4 Z" fill="#292929"/></svg>
<div class="t" style="left:54.60px;top:203.70px;font-size:10.75px;color:#fff;font-weight:normal;font-family:'Liberation Sans', sans-serif;-webkit-text-stroke:0.35px #fff">Site Management</div>
<svg class="a" style="left:182.60px;top:207.80px;" width="8.6" height="6" viewBox="0 0 8.6 6"><path d="M1,1.3 L4.3,4.6 L7.6,1.3" fill="none" stroke="#f2f2f2" stroke-width="1.6" stroke-linecap="round" stroke-linejoin="round"/></svg>
<svg class="a" style="left:20.90px;top:250.00px;" width="15" height="15" viewBox="0 0 15 15"><path d="M14.6,0.9 Q8.8,1.6 5.4,7.2 L8.2,10 Q13.6,6.6 14.6,0.9 Z" fill="none" stroke="#fff" stroke-width="1.3" stroke-linejoin="round"/><path d="M5.4,7.2 L2,7 Q1,7.2 1.7,8 L4.2,9.6 M8.2,10 L8.4,13.2 Q8.6,14.2 9.3,13.4 L10.8,10.8" fill="none" stroke="#fff" stroke-width="1.2" stroke-linejoin="round"/><path d="M10.2,5.1 L7.8,7.7" stroke="#fff" stroke-width="0.9"/><circle cx="11.6" cy="4" r="0.7" fill="#fff"/><path d="M4.6,10.6 L1.2,14 M3.2,9.8 L1,12 M5.8,12 L3.6,14.2" stroke="#fff" stroke-width="1.1"/></svg>
<div class="t" style="left:54.60px;top:250.20px;font-size:10.75px;color:#fff;font-weight:normal;font-family:'Liberation Sans', sans-serif;-webkit-text-stroke:0.35px #fff">Admin Tools</div>
<svg class="a" style="left:182.60px;top:254.80px;" width="8.6" height="6" viewBox="0 0 8.6 6"><path d="M1,1.3 L4.3,4.6 L7.6,1.3" fill="none" stroke="#f2f2f2" stroke-width="1.6" stroke-linecap="round" stroke-linejoin="round"/></svg>
<div class="a" style="left:11.00px;top:286.10px;width:194.00px;height:35.90px;background:#323232;border:1px solid #404040;border-radius:3px"></div>
<svg class="a" style="left:20.60px;top:296.80px;" width="16" height="16" viewBox="0 0 16 16"><path d="M6.8,0.9 H9.2 L9.6,2.8 Q10.6,3.1 11.4,3.7 L13.2,2.9 L14.4,5 L12.9,6.3 Q13.1,7.2 12.9,8.1 L14.4,9.4 L13.2,11.5 L11.4,10.7 Q10.6,11.4 9.6,11.7 L9.2,13.6 H6.8 L6.4,11.7 Q5.4,11.4 4.6,10.7 L2.8,11.5 L1.6,9.4 L3.1,8.1 Q2.9,7.2 3.1,6.3 L1.6,5 L2.8,2.9 L4.6,3.7 Q5.4,3.1 6.4,2.8 Z" fill="none" stroke="#fff" stroke-width="1.4" stroke-linejoin="round" transform="translate(0,0.8)"/><circle cx="8" cy="8" r="2.4" fill="none" stroke="#fff" stroke-width="1.4"/></svg>
<div class="t" style="left:54.20px;top:296.90px;font-size:10.75px;color:#fff;font-weight:normal;font-family:'Liberation Sans', sans-serif;-webkit-text-stroke:0.35px #fff">System</div>
<svg class="a" style="left:182.60px;top:301.00px;" width="8.6" height="6" viewBox="0 0 8.6 6"><path d="M1,4.6 L4.3,1.3 L7.6,4.6" fill="none" stroke="#f2f2f2" stroke-width="1.6" stroke-linecap="round" stroke-linejoin="round"/></svg>
<div class="a" style="left:14.00px;top:326.60px;width:29.10px;height:29.00px;background:#1b5a4a;border-radius:1px"></div>
<svg class="a" style="left:14.00px;top:326.60px;" width="29" height="29" viewBox="0 0 29 29"><path d="M9.7,14 V10.6 Q9.7,6.6 14.4,6.6 Q19.1,6.6 19.1,10.6 V11.4" fill="none" stroke="#fff" stroke-width="2.1"/><rect x="7.8" y="13.8" width="13.5" height="9" rx="0.6" fill="#fff"/><circle cx="14.5" cy="17.3" r="1.5" fill="#1b5a4a"/><path d="M13.7,17.6 H15.3 L14.5,20.4 Z" fill="#1b5a4a"/></svg>
<div class="t" style="left:54.30px;top:334.40px;font-size:10.75px;color:#fff;font-weight:normal;font-family:'Liberation Sans', sans-serif;-webkit-text-stroke:0.35px #fff">Permissions</div>
<div class="a" style="left:11.00px;top:359.80px;width:194.00px;height:36.00px;background:#575757;border:1px solid #7d7d7d;border-radius:3px"></div>
<div class="a" style="left:14.00px;top:363.30px;width:29.10px;height:29.00px;background:#4b8ff2;border-radius:1px"></div>
<svg class="a" style="left:14.00px;top:363.30px;" width="29" height="29" viewBox="0 0 29 29"><path d="M14.6,6 Q10.6,6 10.6,10.8 Q10.6,14.6 12.5,16.5 V17.6 Q7,18.2 6.4,23.2 H22.8 Q22.2,18.2 16.7,17.6 V16.5 Q18.6,14.6 18.6,10.8 Q18.6,6 14.6,6 Z" fill="#fff"/></svg>
<div class="t" style="left:54.30px;top:371.00px;font-size:10.75px;color:#fff;font-weight:normal;font-family:'Liberation Sans', sans-serif;-webkit-text-stroke:0.35px #fff">Backend Users</div>
<div class="a" style="left:14.00px;top:400.20px;width:29.10px;height:29.00px;background:#3b8a54;border-radius:1px"></div>
<svg class="a" style="left:14.00px;top:400.20px;" width="29" height="29" viewBox="0 0 29 29"><rect x="7.3" y="7.1" width="14.7" height="15.1" fill="#fff"/><rect x="7.3" y="12" width="14.7" height="0.8" fill="#3b8a54"/><rect x="7.3" y="17" width="14.7" height="0.8" fill="#3b8a54"/><path d="M18.6,9.6 H19.3 M20.3,9.6 H21 M18.6,14.6 H19.3 M20.3,14.6 H21 M18.6,19.8 H19.3 M20.3,19.8 H21" stroke="#3b8a54" stroke-width="0.9"/></svg>
<div class="t" style="left:54.30px;top:408.00px;font-size:10.75px;color:#fff;font-weight:normal;font-family:'Liberation Sans', sans-serif;-webkit-text-stroke:0.35px #fff">DB Check</div>
<div class="a" style="left:14.00px;top:437.20px;width:29.10px;height:29.00px;background:#e9812e;border-radius:1px"></div>
<svg class="a" style="left:14.00px;top:437.20px;" width="29" height="29" viewBox="0 0 29 29"><path d="M8.2,6.8 V22.3 M12.2,6.8 V22.3 M16.8,6.8 V22.3 M21.3,6.8 V22.3" stroke="#fff" stroke-width="0.9"/><rect x="6.8" y="10.5" width="2.8" height="8" rx="0.8" fill="#fff"/><rect x="10.8" y="11.3" width="2.8" height="8" rx="0.8" fill="#fff"/><rect x="15.4" y="11.8" width="2.8" height="8" rx="0.8" fill="#fff"/><rect x="19.9" y="9.8" width="2.8" height="8" rx="0.8" fill="#fff"/></svg>
<div class="t" style="left:54.30px;top:445.00px;font-size:10.75px;color:#fff;font-weight:normal;font-family:'Liberation Sans', sans-serif;-webkit-text-stroke:0.35px #fff">Configuration</div>
<div class="a" style="left:14.00px;top:474.30px;width:29.10px;height:29.00px;background:#8c2a6d;border-radius:1px"></div>
<svg class="a" style="left:14.00px;top:474.30px;" width="29" height="29" viewBox="0 0 29 29"><rect x="8" y="6.5" width="13" height="16" fill="#fff"/><rect x="9.5" y="8.5" width="6" height="1.2" fill="#8c2a6d"/><rect x="9.5" y="10.5" width="6" height="1.2" fill="#8c2a6d"/><rect x="10" y="16" width="1.5" height="4" fill="#8c2a6d"/><rect x="12.5" y="17.5" width="1.5" height="2.5" fill="#8c2a6d"/><rect x="15" y="15" width="1.5" height="5" fill="#8c2a6d"/><rect x="18.3" y="8.5" width="1" height="12" fill="#8c2a6d"/></svg>
<div class="t" style="left:54.30px;top:482.10px;font-size:10.75px;color:#fff;font-weight:normal;font-family:'Liberation Sans', sans-serif;-webkit-text-stroke:0.35px #fff">Reports</div>
<div class="a" style="left:14.00px;top:511.30px;width:29.10px;height:29.00px;background:#d8473a;border-radius:1px"></div>
<svg class="a" style="left:14.00px;top:511.30px;" width="29" height="29" viewBox="0 0 29 29"><rect x="8.5" y="7.5" width="12" height="15" fill="#fff"/><rect x="11.5" y="6" width="6" height="2.5" fill="#fff" stroke="#d8473a" stroke-width="0.6"/><path d="M10.5,11 H11.5 M10.5,13.5 H11.5 M10.5,16 H11.5 M10.5,18.5 H11.5 M13,11 H18.5 M13,13.5 H18.5 M13,16 H18.5 M13,18.5 H18.5" stroke="#d8473a" stroke-width="0.9"/></svg>
<div class="t" style="left:54.30px;top:519.10px;font-size:10.75px;color:#fff;font-weight:normal;font-family:'Liberation Sans', sans-serif;-webkit-text-stroke:0.35px #fff">Log</div>
<div class="a" style="left:0.00px;top:0.00px;width:1440.00px;height:1.00px;background:#9a9a9a"></div>
<div class="a" style="left:1.00px;top:1.00px;width:1438.00px;height:1.00px;background:#050505"></div>
<div class="a" style="left:0.00px;top:0.00px;width:1.00px;height:811.00px;background:#9a9a9a"></div>
<div class="a" style="left:1.00px;top:1.00px;width:1.00px;height:808.70px;background:#0a0a0a"></div>
<div class="a" style="left:1438.00px;top:1.00px;width:1.00px;height:40.00px;background:#050505"></div>
<div class="a" style="left:1439.00px;top:0.00px;width:1.00px;height:41.00px;background:#9a9a9a"></div>
<div class="a" style="left:1437.70px;top:41.00px;width:1.10px;height:768.70px;background:#ffffff"></div>
<div class="a" style="left:1438.80px;top:41.00px;width:1.20px;height:770.00px;background:#444444"></div>
<div class="a" style="left:1.00px;top:808.80px;width:215.00px;height:0.90px;background:#0a0a0a"></div>
<div class="a" style="left:0.00px;top:809.70px;width:216.00px;height:1.30px;background:#9a9a9a"></div>
<div class="a" style="left:216.00px;top:808.90px;width:1222.80px;height:0.80px;background:#ffffff"></div>
<div class="a" style="left:216.00px;top:809.70px;width:1224.00px;height:1.30px;background:#444444"></div>
</body></html>
